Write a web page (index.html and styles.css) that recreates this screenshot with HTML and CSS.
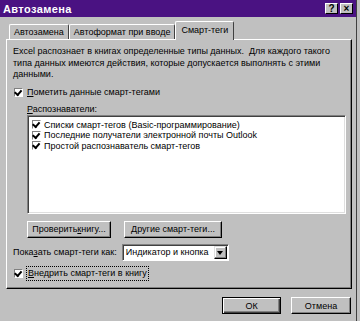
FILE: index.html
```html
<!DOCTYPE html>
<html lang="ru">
<head>
    <meta charset="UTF-8">
    <title>Автозамена</title>
    <link rel="stylesheet" href="styles.css">
</head>
<body>
    <div class="window">
        <div class="titlebar">
            <span class="title">Автозамена</span>
            <span class="tb-buttons">
                <span class="tb-btn">?</span>
                <span class="tb-btn">×</span>
            </span>
        </div>
        <div class="tabs">
            <div class="tab">Автозамена</div>
            <div class="tab">Автоформат при вводе</div>
            <div class="tab active">Смарт-теги</div>
        </div>
        <div class="panel">
            <p class="intro">Excel распознает в книгах определенные типы данных.&nbsp; Для каждого такого<br>типа данных имеются действия, которые допускается выполнять с этими<br>данными.</p>
            <div class="check-row">
                <span class="check"></span>
                <span><u>П</u>ометить данные смарт-тегами</span>
            </div>
            <div class="group">
                <div class="group-label"><u>Р</u>аспознаватели:</div>
                <div class="listbox">
                    <div class="item"><span class="check"></span>Списки смарт-тегов (Basic-программирование)</div>
                    <div class="item"><span class="check"></span>Последние получатели электронной почты Outlook</div>
                    <div class="item"><span class="check"></span>Простой распознаватель смарт-тегов</div>
                </div>
                <div class="btn-row">
                    <span class="btn btn-check">Проверить <u>к</u>нигу...</span>
                    <span class="btn btn-more">Другие смарт-теги...</span>
                </div>
            </div>
            <div class="show-row">
                <span>Пока<u>з</u>ать смарт-теги как:</span>
                <span class="select">
                    <span class="select-text">Индикатор и кнопка</span>
                    <span class="select-arrow"></span>
                </span>
            </div>
            <div class="check-row embed">
                <span class="check"></span>
                <span class="focus"><u>В</u>недрить смарт-теги в книгу</span>
            </div>
        </div>
        <div class="footer">
            <span class="btn btn-ok">ОК</span>
            <span class="btn btn-cancel">Отмена</span>
        </div>
    </div>
</body>
</html>
```

FILE: styles.css
```css
body {
    margin: 0;
    background: #c0c0c0;
    font-family: "Liberation Sans", Arial, sans-serif;
    font-size: 9px;
    color: #000;
}
u {
    text-decoration: underline;
}
.window {
    width: 357px;
    height: 321px;
    box-sizing: border-box;
    border-right: 1px solid #404040;
    background: #c0c0c0;
}
.titlebar {
    height: 17px;
    background: #4a1282;
    display: flex;
    align-items: center;
    justify-content: space-between;
    padding: 0 3px 0 3px;
}
.title {
    color: #fff;
    font-weight: bold;
    font-size: 11px;
    letter-spacing: 0.4px;
}
.tb-buttons {
    display: flex;
    gap: 2px;
}
.tb-btn {
    width: 13px;
    height: 11px;
    box-sizing: border-box;
    background: #c0c0c0;
    border-top: 1px solid #fff;
    border-left: 1px solid #fff;
    border-right: 1px solid #000;
    border-bottom: 1px solid #000;
    font-weight: bold;
    font-size: 10px;
    line-height: 9px;
    text-align: center;
}
.tabs {
    display: flex;
    align-items: flex-end;
    height: 22px;
    padding-left: 9px;
}
.tab {
    height: 15px;
    box-sizing: border-box;
    padding: 2px 4px 0 4px;
    border-top: 1px solid #fff;
    border-left: 1px solid #fff;
    border-right: 1px solid #404040;
    border-radius: 2px 2px 0 0;
    white-space: nowrap;
}
.tab.active {
    height: 19px;
    margin-bottom: -1px;
    padding: 3px 5px 0 5px;
    background: #c0c0c0;
    position: relative;
    z-index: 1;
}
.panel {
    margin-left: 6px;
    width: 346px;
    height: 250px;
    box-sizing: border-box;
    border-top: 1px solid #fff;
    border-left: 1px solid #fff;
    border-right: 1px solid #000;
    border-bottom: 1px solid #000;
    box-shadow: inset -1px -1px #808080;
    padding: 6px 5px 0 6px;
    display: flex;
    flex-direction: column;
}
.intro {
    margin: 0;
    line-height: 11.5px;
}
.check {
    display: inline-block;
    width: 9px;
    height: 9px;
    box-sizing: border-box;
    background: #fff;
    border-top: 1px solid #808080;
    border-left: 1px solid #808080;
    border-right: 1px solid #fff;
    border-bottom: 1px solid #fff;
    position: relative;
    flex: none;
}
.check::after {
    content: "";
    position: absolute;
    left: 1px;
    top: 0px;
    width: 3px;
    height: 5px;
    border-right: 2px solid #000;
    border-bottom: 2px solid #000;
    transform: rotate(40deg);
    transform-origin: 60% 40%;
}
.check-row {
    display: flex;
    align-items: center;
    gap: 4px;
    height: 13px;
    margin-top: 5px;
    padding-left: 1px;
}
.group {
    margin-left: 14px;
}
.group-label {
    margin-top: 5px;
    height: 11px;
    line-height: 11px;
}
.listbox {
    height: 99px;
    box-sizing: border-box;
    background: #fff;
    border-top: 1px solid #808080;
    border-left: 1px solid #808080;
    border-right: 1px solid #fff;
    border-bottom: 1px solid #fff;
    box-shadow: inset 1px 1px #404040, inset -1px -1px #dfdfdf;
    padding: 4px 4px;
}
.item {
    display: flex;
    align-items: center;
    gap: 3px;
    height: 10.5px;
    white-space: nowrap;
}
.btn-row {
    display: flex;
    gap: 13px;
    margin-top: 7px;
}
.btn {
    display: flex;
    align-items: center;
    justify-content: center;
    height: 17px;
    box-sizing: border-box;
    background: #c0c0c0;
    border-top: 1px solid #fff;
    border-left: 1px solid #fff;
    border-right: 1px solid #000;
    border-bottom: 1px solid #000;
    box-shadow: inset -1px -1px #808080;
    white-space: nowrap;
}
.btn-check {
    width: 84px;
}
.btn-more {
    width: 98px;
}
.show-row {
    display: flex;
    align-items: center;
    gap: 5px;
    margin-top: 6px;
    height: 17px;
}
.select {
    display: flex;
    align-items: center;
    width: 107px;
    height: 17px;
    box-sizing: border-box;
    background: #fff;
    border-top: 1px solid #808080;
    border-left: 1px solid #808080;
    border-right: 1px solid #fff;
    border-bottom: 1px solid #fff;
    box-shadow: inset 1px 1px #404040;
    padding: 1px;
}
.select-text {
    flex: 1;
    padding-left: 2px;
}
.select-arrow {
    width: 13px;
    height: 13px;
    box-sizing: border-box;
    background: #c0c0c0;
    border-top: 1px solid #dfdfdf;
    border-left: 1px solid #dfdfdf;
    border-right: 1px solid #000;
    border-bottom: 1px solid #000;
    box-shadow: inset -1px -1px #808080, inset 1px 1px #fff;
    position: relative;
}
.select-arrow::after {
    content: "";
    position: absolute;
    left: 2px;
    top: 4px;
    border-left: 3.5px solid transparent;
    border-right: 3.5px solid transparent;
    border-top: 4px solid #000;
}
.embed {
    margin-top: 6px;
}
.focus {
    outline: 1px dotted #000;
    padding: 1px 1px;
    line-height: 11px;
}
.footer {
    display: flex;
    justify-content: flex-end;
    gap: 10px;
    padding: 8px 5px 0 0;
}
.btn-ok {
    width: 59px;
    border: 1px solid #000;
    box-shadow: inset 1px 1px #fff, inset -1px -1px #404040, inset -2px -2px #808080;
}
.btn-cancel {
    width: 60px;
}
```
